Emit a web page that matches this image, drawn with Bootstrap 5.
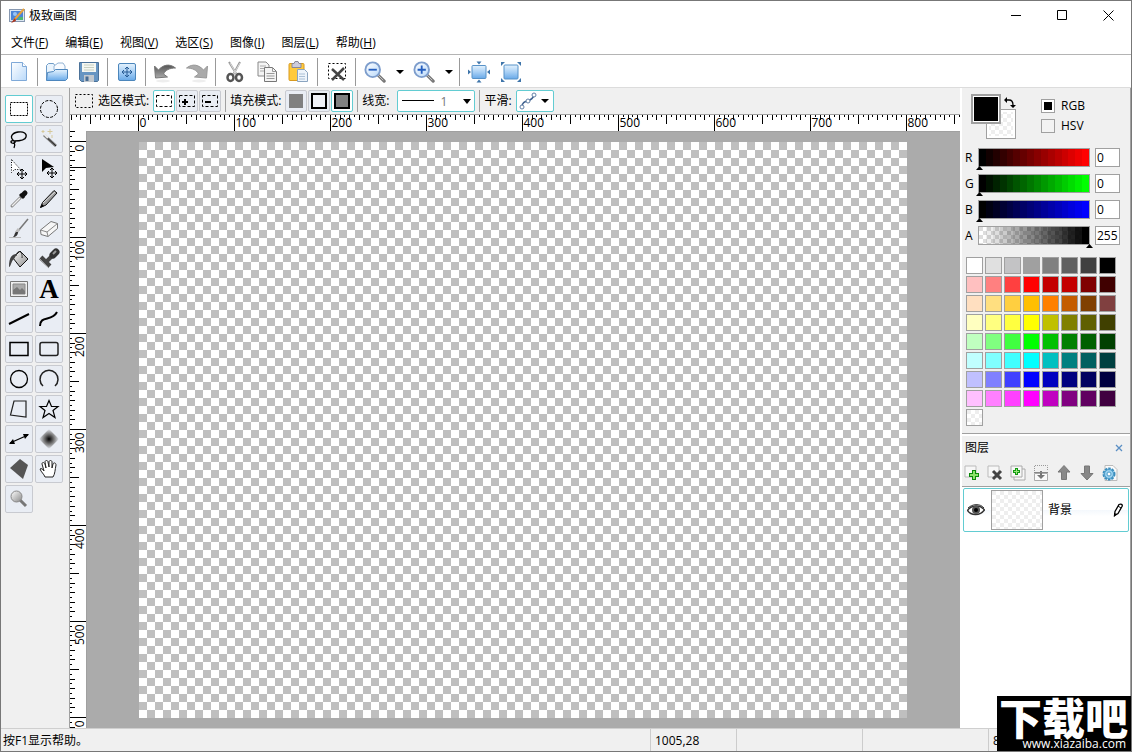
<!DOCTYPE html>
<html lang="zh-CN">
<head>
<meta charset="utf-8">
<meta name="viewport" content="width=device-width, initial-scale=1">
<title>极致画图</title>
<link href="https://cdn.jsdelivr.net/npm/bootstrap@5.3.0/dist/css/bootstrap.min.css" rel="stylesheet">
<style>
:root { --edge:#a0a0a0; --teal:#62ccd2; --face:#f0f0f0; }
body { font-family:"Open Sans","Noto Sans CJK SC",sans-serif; font-size:12px; line-height:16px; color:#000; background:#fff; }
button { font:inherit; color:inherit; padding:0; }
.app { border:1px solid #777; background:var(--face); }
.titlebar { height:29px; background:#fff; padding-left:8px; }
.win-btn { width:46px; height:29px; border:0; background:none; display:flex; align-items:center; justify-content:center; }
.menubar { height:25px; background:#fff; border-bottom:1px solid #b4b4b4; padding:2px 0 0 2px; gap:1px; }
.menubar .nav-link { color:#000; padding:3px 8px; }
.toolbar { height:33px; background:#fff; border-bottom:1px solid #dcdcdc; padding:2px 0 0 2px; }
.tb { width:32px; height:30px; border:0; background:none; display:flex; align-items:center; justify-content:center; }
.tb-drop { width:17px; height:30px; border:0; background:none; display:flex; align-items:center; justify-content:center; }
.tb-sep { width:1px; height:28px; background:#999; margin:0 3px 0 2px; }
.caret { width:0; height:0; border:4px solid transparent; border-top-color:#000; border-bottom:0; }
.toolbox { width:69px; border-right:1px solid var(--edge); padding:7px 0 0 4px; }
.tool-grid { display:grid; grid-template-columns:28px 28px; gap:2px; }
.tool { width:28px; height:28px; border:1px solid #c8cad0; border-radius:2px; background:#e9edf4; display:flex; align-items:center; justify-content:center; }
.tool svg { overflow:visible; }
.tool.on { border-color:var(--teal); background:#fff; }
.tool.sm { width:22px; height:22px; }
.options { height:27px; border-bottom:1px solid var(--edge); padding-left:4px; gap:4px; }
.tool-row { display:flex; gap:1px; }
.opt-sep { width:1px; height:22px; background:var(--edge); }
.opt-drop { height:22px; border:1px solid var(--teal); border-radius:2px; background:#fff; }
button.opt-drop { width:38px; padding:0 2px; }
select.opt-drop { width:78px; appearance:none; color:#777; padding:0 0 0 42px; font:12px "Open Sans",sans-serif; outline:0;
  background:#fff url("data:image/svg+xml,%3Csvg xmlns='http://www.w3.org/2000/svg' width='76' height='20'%3E%3Cpath d='M4 9.5h32' stroke='%23000'/%3E%3Cpath d='M65 8h8l-4 5z'/%3E%3C/svg%3E") no-repeat; }
.hruler { height:16px; background:#fff; }
.vruler { width:16px; background:#fff; }
.hruler svg, .vruler svg { display:block; width:100%; height:100%; overflow:visible; }
.hruler text, .vruler text { font-size:12px; }
.work { background:#ababab; border-left:1px solid var(--edge); border-top:1px solid var(--edge); padding-right:2px; }
.paper { flex:none; width:768px; height:576px; background:repeating-conic-gradient(#fff 0 25%,#bfbfbf 0 50%) 0 0/16px 16px; }
.faint { background:repeating-conic-gradient(#fff 0 25%,#eee 0 50%) 0 0/8px 8px; }
.side { width:171px; border-left:2px solid #fff; border-right:1px solid var(--edge); }
.colors { height:346px; border-bottom:1px solid var(--edge); padding:6px 0 0 3px; }
.swatches { position:relative; width:46px; height:45px; margin-left:6px; }
.chip { position:absolute; width:30px; height:30px; border:1px solid var(--edge); }
.chip.front { left:0; top:0; border-width:2px; background:#000; box-shadow:inset 0 0 0 1px #fff; }
.chip.back { left:15px; top:15px; box-shadow:inset 0 0 0 2px #fff; }
.swap { position:absolute; left:33px; top:3px; border:0; background:none; line-height:0; }
.modes { gap:4px; padding-top:4px; }
.modes label { display:flex; align-items:center; gap:6px; }
.tick { appearance:none; width:14px; height:14px; margin:0; border:1px solid var(--edge); background:#f3f3f3; }
.tick:checked { background:linear-gradient(#000,#000) center/8px 8px no-repeat #fff; }
.chans { padding-top:9px; }
.chan { height:19px; margin-bottom:7px; }
.chan-name { width:13px; }
.chan-bar { position:relative; width:112px; height:19px; border:1px solid var(--edge); }
.chan-bar input { position:absolute; left:-3px; top:-1px; width:117px; height:23px; margin:0; appearance:none; background:none; }
.chan-bar input::-webkit-slider-runnable-track { height:23px; background:none; }
.chan-bar input::-webkit-slider-thumb { appearance:none; width:7px; height:4px; margin-top:18px; background:#000; clip-path:polygon(50% 0,100% 100%,0 100%); }
.chan-val { width:25px; height:19px; margin-left:5px; border:1px solid var(--edge); padding:0 0 0 1px; font:12px "Open Sans",sans-serif; outline:0; }
.palette { display:grid; grid-template-columns:repeat(8,17px); gap:2px; margin:12px 0 0 1px; }
.palette button { width:17px; height:17px; border:1px solid var(--edge); }
.layers-head { border-top:2px solid #fff; height:25px; padding:1px 4px 0 3px; }
.layer-close { border:0; background:none; line-height:0; padding:3px; }
.layer-tools { height:28px; border-bottom:1px solid var(--edge); }
.layer-tools button { width:23px; border:0; background:none; line-height:0; padding-right:4px; }
.layer-list { background:#fff; padding:1px; }
.layer { height:44px; border:1px solid var(--teal); border-radius:2px; padding:0 4px 0 3px; background:linear-gradient(#fff 50%,#f4f8fc 50%,#fff 65%); }
.thumb { width:52px; height:40px; border:1px solid var(--edge); margin:0 5px 0 6px; }
.status { height:23px; border-top:1px solid #cfcfcf; }
.status > span { padding:4px 0 0 2px; }
.status > .cell { border-left:1px solid #ccc; padding-left:4px; }
.brand { position:absolute; right:0; bottom:0; width:134px; height:55px; background:#000; color:#fff; overflow:hidden; }
.brand strong { display:block; font:900 43px/40px "Noto Sans CJK SC",sans-serif; white-space:nowrap; padding-left:2px; }
.brand span { display:block; text-align:right; padding-right:5px; line-height:15px; }
</style>
</head>
<body>
<svg width="0" height="0" class="position-absolute" aria-hidden="true">
  <defs>
    <linearGradient id="blue" x1="0" y1="0" x2="0" y2="1"><stop offset="0" stop-color="#e4f2fd"/><stop offset=".5" stop-color="#a9d0f5"/><stop offset="1" stop-color="#68a9e8"/></linearGradient>
    <linearGradient id="pale" x1="0" y1="0" x2="1" y2="1"><stop offset="0" stop-color="#fff"/><stop offset="1" stop-color="#b9d9fa"/></linearGradient>
    <linearGradient id="steel" x1="0" y1="0" x2="0" y2="1"><stop offset="0" stop-color="#555"/><stop offset="1" stop-color="#aaa"/></linearGradient>
    <linearGradient id="silver" x1="0" y1="0" x2="1" y2="1"><stop offset="0" stop-color="#fff"/><stop offset="1" stop-color="#888"/></linearGradient>
    <radialGradient id="soft"><stop offset="0" stop-color="#000"/><stop offset=".5" stop-color="#777"/><stop offset="1" stop-color="#e9edf4"/></radialGradient>
    <g id="lens"><path d="M15 15l7 7" stroke="#777" stroke-width="3.4" stroke-linecap="round"/><path d="M15 15l6 6" stroke="#ccc" stroke-width="1"/><circle cx="9.500" cy="9.500" r="8" fill="url(#pale)" stroke="#7d9dcc" stroke-width="2"/></g>
    <path id="cross4" d="M0-5V5M-5 0H5M-2-3L0-5 2-3M-2 3L0 5 2 3M-3-2L-5 0-3 2M3-2L5 0 3 2"/>
  </defs>
</svg>

<div class="app d-flex flex-column vh-100 overflow-hidden position-relative">
  <header class="titlebar d-flex align-items-center">
    <svg width="16" height="16" viewBox="0 0 16 16"><rect x=".5" y="1.500" width="15" height="12" fill="#dce6f2" stroke="#8798b0"/><rect x="2" y="3" width="12" height="9" fill="#4a84d8"/><circle cx="6" cy="6" r="2" fill="#9cc4f4"/><path d="M10 9h4v3h-5z" fill="#4fb870"/><path d="M15 1L5 12" stroke="#e9a23b" stroke-width="2"/><path d="M6 10l-4 5 5-2z" fill="#a83520"/></svg>
    <span class="ms-1 flex-grow-1">极致画图</span>
    <button class="win-btn" aria-label="最小化"><svg width="11" height="11"><path d="M0 5.500h10" stroke="#000"/></svg></button>
    <button class="win-btn" aria-label="最大化"><svg width="11" height="11"><path d="M.5.5h9v9h-9z" fill="none" stroke="#000"/></svg></button>
    <button class="win-btn" aria-label="关闭"><svg width="11" height="11"><path d="M.5.5l10 10M10.500.5l-10 10" stroke="#000"/></svg></button>
  </header>

  <nav class="menubar nav flex-nowrap align-items-center">
    <a class="nav-link" href="#">文件(<u>F</u>)</a>
    <a class="nav-link" href="#">编辑(<u>E</u>)</a>
    <a class="nav-link" href="#">视图(<u>V</u>)</a>
    <a class="nav-link" href="#">选区(<u>S</u>)</a>
    <a class="nav-link" href="#">图像(<u>I</u>)</a>
    <a class="nav-link" href="#">图层(<u>L</u>)</a>
    <a class="nav-link" href="#">帮助(<u>H</u>)</a>
  </nav>

  <div class="toolbar d-flex align-items-center" role="toolbar">
    <button class="tb" aria-label="新建"><svg width="18" height="22"><path d="M1.500 1.500h11l4 4v14h-15z" fill="url(#pale)" stroke="#7fa9d8"/><path d="M12.500 1.500v4h4" fill="#fff" stroke="#7fa9d8"/></svg></button>
    <i class="tb-sep"></i>
    <button class="tb" aria-label="打开"><svg width="24" height="22"><path d="M1.500 19V4.500l2-2h5l2 3h9v5" fill="#eaf4fd" stroke="#6f9cc8"/><path d="M9 5l4-3h5l2 3v4H9z" fill="#f8fbff" stroke="#94b4d4"/><path d="M1.500 19.500l1-8 6-1 2-2h12v9l-2 2z" fill="url(#blue)" stroke="#4d86bd"/></svg></button>
    <button class="tb" aria-label="保存"><svg width="20" height="20"><path d="M.5.5h19v18l-1 1h-16l-2-2z" fill="#6795c2" stroke="#4c7299"/><path d="M3 1h14v9H3z" fill="#f5f7f2"/><path d="M5 3h10M5 5.500h10M5 8h10" stroke="#c8d0c0"/><path d="M5 13h10v7H5z" fill="#c2c8ce"/><path d="M6.500 14.500h3V19h-3z" fill="#476c94"/></svg></button>
    <i class="tb-sep"></i>
    <button class="tb" aria-label="画布大小"><svg width="18" height="18"><rect x=".5" y=".5" width="17" height="17" rx="1.500" fill="url(#blue)" stroke="#4c86bb"/><use href="#cross4" x="9" y="9" fill="none" stroke="#265b94"/></svg></button>
    <i class="tb-sep"></i>
    <button class="tb" aria-label="撤销"><svg width="24" height="22"><path d="M1.500 5l1 12 12-1-4-3c2-4 6-6 12-6C16 2 10 4 5.500 9z" fill="url(#steel)" stroke="#777"/><ellipse cx="10" cy="20" rx="7" ry="1.500" fill="#eee"/></svg></button>
    <button class="tb" aria-label="重做"><svg width="24" height="22"><path d="M22.500 5l-1 12-12-1 4-3c-2-4-6-6-12-6C8 2 14 4 18.500 9z" fill="#aaa" stroke="#999"/><ellipse cx="14" cy="20" rx="7" ry="1.500" fill="#eee"/></svg></button>
    <i class="tb-sep"></i>
    <button class="tb" aria-label="剪切"><svg width="18" height="22"><path d="M3 1l8 13M14 1L7 14" stroke="#999" stroke-width="2"/><path d="M4 2l7 12M14 2L7 14" stroke="#e8e8e8" stroke-width=".8"/><ellipse cx="4.500" cy="16.500" rx="3" ry="3.500" fill="none" stroke="#555" stroke-width="2.500"/><ellipse cx="13" cy="16.500" rx="3" ry="3.500" fill="none" stroke="#555" stroke-width="2.500"/></svg></button>
    <button class="tb" aria-label="复制"><svg width="20" height="22"><path d="M1 1h8l3 3v11H1z" fill="#f4f4f4" stroke="#888"/><path d="M3 5h6M3 7.500h6M3 10h4" stroke="#aaa"/><path d="M7.500 6.500h8l4 4v10h-12z" fill="#f4f4f4" stroke="#777"/><path d="M15.500 6.500v4h4M9.500 12.500h8M9.500 15h8M9.500 17.500h8" fill="none" stroke="#999"/></svg></button>
    <button class="tb" aria-label="粘贴"><svg width="22" height="22"><rect x="1" y="2.500" width="15" height="17" rx="1" fill="#ffca3c" stroke="#d89a20"/><path d="M4 2.500h2l1-2h3l1 2h2v4H4z" fill="#ccd" stroke="#889"/><path d="M9.500 8.500h7l3 3v9h-10z" fill="#edf4fb" stroke="#8aa4c0"/><path d="M11 13h6M11 15.500h6M11 18h6" stroke="#abc0d6"/></svg></button>
    <i class="tb-sep"></i>
    <button class="tb" aria-label="取消选择"><svg width="20" height="20"><path d="M1.500 1.500h17v15h-17z" fill="none" stroke="#000" stroke-dasharray="2 2"/><path d="M5 7l12 11M17 6L5 18" stroke="#444" stroke-width="2.500"/></svg></button>
    <i class="tb-sep"></i>
    <button class="tb" aria-label="缩小"><svg width="22" height="22" viewBox="0 0 24 24"><use href="#lens"/><path d="M5 9.500h9" stroke="#255fc0" stroke-width="2"/></svg></button>
    <button class="tb-drop" aria-label="缩小比例"><i class="caret"></i></button>
    <button class="tb" aria-label="放大"><svg width="22" height="22" viewBox="0 0 24 24"><use href="#lens"/><path d="M5 9.500h9M9.500 5v9" stroke="#255fc0" stroke-width="2"/></svg></button>
    <button class="tb-drop" aria-label="放大比例"><i class="caret"></i></button>
    <i class="tb-sep"></i>
    <button class="tb" aria-label="实际大小"><svg width="22" height="22"><rect x="4" y="4.500" width="14" height="13" rx="1" fill="url(#blue)" stroke="#5792c8"/><path d="M8.500 0.500h5l-2.500 3zM8.500 21.500h5l-2.500-3zM0 8.500v5l3-2.500zM22 8.500v5l-3-2.500z" fill="#3f75aa"/></svg></button>
    <button class="tb" aria-label="适合窗口"><svg width="20" height="20"><rect x="3" y="3" width="14" height="14" rx="1" fill="url(#blue)" stroke="#5792c8"/><path d="M0 0h4L0 4zM20 0v4l-4-4zM0 20v-4l4 4zM20 20h-4l4-4z" fill="#3f75aa"/></svg></button>
  </div>

  <div class="d-flex flex-grow-1 overflow-hidden">
    <aside class="toolbox flex-shrink-0">
      <div class="tool-grid">
        <button class="tool on" aria-label="矩形选区"><svg width="20" height="16"><path d="M1.500 1.500h17v13h-17z" fill="none" stroke="#000" stroke-dasharray="2 1"/></svg></button>
        <button class="tool" aria-label="椭圆选区"><svg width="20" height="20"><circle cx="10" cy="10" r="8.500" fill="none" stroke="#000" stroke-dasharray="3 1.500"/></svg></button>
        <button class="tool" aria-label="套索"><svg width="20" height="20"><path d="M5 12C0 8 3 4 9 3c6-1 9 2 8 5-1 4-8 4-12 4-3-1-4 1-2 2s4-1 3-2M5 13c1 2 1 4 0 6" fill="none" stroke="#000" stroke-width="1.300"/></svg></button>
        <button class="tool" aria-label="魔棒"><svg width="20" height="20"><path d="M5 6l12 11" stroke="#777" stroke-width="3"/><path d="M5 6l12 11" stroke="#222"/><path d="M5 5l4 4" stroke="#eee" stroke-width="2"/><path d="M11 0v5M8.500 2.500h5M4 1v3M2.500 2.500h3M13 6v3" stroke="#d5c89a"/></svg></button>
        <button class="tool" aria-label="移动选区"><svg width="22" height="22"><path d="M3.500 1.500v13l3-3h6z" fill="#fff" stroke="#000" stroke-dasharray="1 1.500"/><use href="#cross4" x="14" y="16" fill="none" stroke="#000"/></svg></button>
        <button class="tool" aria-label="移动"><svg width="22" height="22"><path d="M4 1v13l4-4 8-1z"/><use href="#cross4" x="14" y="15" fill="none" stroke="#000"/></svg></button>
        <button class="tool" aria-label="吸管"><svg width="20" height="20"><path d="M3 17l9-9" stroke="#888" stroke-width="3" stroke-linecap="round"/><path d="M3 17l8-8" stroke="#eee" stroke-width="1.500"/><path d="M11 5l4 4" stroke="#111" stroke-width="3"/><path d="M14 6l2-2" stroke="#111" stroke-width="5" stroke-linecap="round"/></svg></button>
        <button class="tool" aria-label="铅笔"><svg width="20" height="20"><path d="M1.500 18.500l2-5L15 1.500l3 2.500L7 16z" fill="#999" stroke="#111"/><path d="M4 14L16 3" stroke="#ddd"/><path d="M1 19l2-4 2 2z"/></svg></button>
        <button class="tool" aria-label="画笔"><svg width="22" height="22"><path d="M20 1L10 13" stroke="#777" stroke-width="1.500"/><path d="M11 11l-3 4" stroke="#bbb" stroke-width="3"/><path d="M10 14c0 3-2 5-5 5 2-2 1-3 3-5z" fill="#333"/><path d="M1 19.500h12" stroke="#bbb"/></svg></button>
        <button class="tool" aria-label="橡皮"><svg width="20" height="18"><path d="M1.500 10L12 1.500l6.500 2v5L9 16.500l-7-2z" fill="#f6f6f6" stroke="#777"/><path d="M1.500 10L8 12l10.500-8.500M8 12l1 4.500" fill="none" stroke="#888"/></svg></button>
        <button class="tool" aria-label="填充"><svg width="22" height="20"><path d="M5 9l7-7 8 8-8 8z" fill="url(#silver)" stroke="#111"/><path d="M8 7c1-7 7-5 6 2" fill="none" stroke="#333"/><path d="M9 5c-5 0-8 3-8 13 2 0 2-6 5-8z" fill="#444"/></svg></button>
        <button class="tool" aria-label="图章"><svg width="22" height="22"><path d="M8 14l9-9" stroke="#444" stroke-width="4"/><path d="M15 7l3-3" stroke="#333" stroke-width="7" stroke-linecap="round"/><path d="M15 6l3-3" stroke="#999" stroke-width="2"/><path d="M3 9l9 9" stroke="#444" stroke-width="4"/><path d="M1 11l10 9" stroke="#888"/></svg></button>
        <button class="tool" aria-label="插入图片"><svg width="18" height="16"><path d="M.5.5h17v15H.5z" fill="#eee" stroke="#777"/><path d="M3 3h12v10H3z" fill="#aaa" stroke="#888"/><path d="M3 9l4-3 3 3 2-2 3 3v3H3z" fill="#777"/></svg></button>
        <button class="tool" aria-label="文字"><svg width="24" height="24"><text x="12" y="21" text-anchor="middle" font-family="Liberation Serif,serif" font-weight="bold" font-size="27">A</text></svg></button>
        <button class="tool" aria-label="直线"><svg width="22" height="14"><path d="M1 12L21 2" stroke="#000" stroke-width="2"/></svg></button>
        <button class="tool" aria-label="曲线"><svg width="20" height="20"><path d="M1 17c0-11 12-4 17-14" fill="none" stroke="#000" stroke-width="2"/></svg></button>
        <button class="tool" aria-label="矩形"><svg width="20" height="16"><path d="M1 1.500h18v13H1z" fill="none" stroke="#000" stroke-width="1.500"/></svg></button>
        <button class="tool" aria-label="圆角矩形"><svg width="20" height="16"><rect x="1" y="1.500" width="18" height="13" rx="2" fill="none" stroke="#222" stroke-width="1.500"/></svg></button>
        <button class="tool" aria-label="椭圆"><svg width="20" height="20"><circle cx="10" cy="10" r="8.500" fill="none" stroke="#000" stroke-width="1.300"/></svg></button>
        <button class="tool" aria-label="圆弧"><svg width="20" height="20"><path d="M4 17a9 9 0 1 1 12 0" fill="none" stroke="#222" stroke-width="1.500"/></svg></button>
        <button class="tool" aria-label="多边形"><svg width="20" height="20"><path d="M5 2h12v16L1.500 16z" fill="none" stroke="#222" stroke-width="1.200"/></svg></button>
        <button class="tool" aria-label="星形"><svg width="22" height="20"><path d="M11 1.500l2.500 6H20l-5 4 2 7-6-4-6 4 2-7-5-4h6.500z" fill="none" stroke="#000" stroke-width="1.200"/></svg></button>
        <button class="tool" aria-label="箭头"><svg width="22" height="12"><path d="M2 10L20 2" stroke="#000" stroke-width="1.200"/><path d="M1 11l4-5 2 5zM21 1l-6 0 2 5z"/></svg></button>
        <button class="tool" aria-label="渐变"><svg width="20" height="20"><path d="M10 0l10 10-10 10L0 10z" fill="url(#soft)"/></svg></button>
        <button class="tool" aria-label="填充多边形"><svg width="20" height="20"><path d="M11 0l8 6-5 14L1 9z" fill="#555"/></svg></button>
        <button class="tool" aria-label="抓手"><svg width="20" height="20"><path d="M6 18c-1-3-4-5-5-8 1-1 3 0 4 2L3 5c0-2 2-2 3 0l1 4-1-6c0-2 3-2 3 0l1 5V3c0-2 3-2 3 0v6l1-4c1-2 3-1 3 1-1 5-1 9-3 12z" fill="#fff" stroke="#222"/></svg></button>
        <button class="tool" aria-label="缩放"><svg width="20" height="20"><path d="M11 11l6 6" stroke="#777" stroke-width="3"/><circle cx="7.500" cy="7.500" r="5.500" fill="url(#silver)" stroke="#888"/></svg></button>
      </div>
    </aside>

    <main class="d-flex flex-column flex-grow-1 overflow-hidden">
      <div class="options d-flex align-items-center flex-shrink-0">
        <svg width="20" height="16"><path d="M1.500 1.500h17v13h-17z" fill="none" stroke="#000" stroke-dasharray="2 2"/></svg>
        <span>选区模式:</span>
        <div class="tool-row">
          <button class="tool sm on" aria-label="新选区"><svg width="18" height="12"><path d="M1.500.5h15v11h-15z" fill="none" stroke="#000" stroke-dasharray="3 2"/></svg></button>
          <button class="tool sm" aria-label="添加到选区"><svg width="18" height="12"><path d="M1.500.5h15v11h-15z" fill="none" stroke="#000" stroke-dasharray="3 2"/><path d="M4 7h6M7 4v6" stroke="#000" stroke-width="2"/></svg></button>
          <button class="tool sm" aria-label="从选区减去"><svg width="18" height="12"><path d="M1.500.5h15v11h-15z" fill="none" stroke="#000" stroke-dasharray="3 2"/><path d="M4 7h6" stroke="#000" stroke-width="2"/></svg></button>
        </div>
        <i class="opt-sep"></i>
        <span>填充模式:</span>
        <div class="tool-row">
          <button class="tool sm" aria-label="填充"><svg width="14" height="14"><path d="M0 0h14v14H0z" fill="#808080"/></svg></button>
          <button class="tool sm" aria-label="描边"><svg width="16" height="16"><path d="M1 1h14v14H1z" fill="#f0f2f8" stroke="#000" stroke-width="2"/></svg></button>
          <button class="tool sm on" aria-label="填充与描边"><svg width="16" height="16"><path d="M1 1h14v14H1z" fill="#808080" stroke="#000" stroke-width="2"/></svg></button>
        </div>
        <i class="opt-sep"></i>
        <label for="lw">线宽:</label>
        <select id="lw" class="opt-drop ms-1"><option>1</option></select>
        <i class="opt-sep"></i>
        <span id="smooth">平滑:</span>
        <button class="opt-drop d-flex align-items-center gap-1" aria-labelledby="smooth"><svg width="18" height="18"><path d="M3 15C3 6 13 12 15 3" fill="none" stroke="#3f618e" stroke-width="1.500"/><g fill="#fff" stroke="#6280a6"><circle cx="3" cy="15" r="2"/><circle cx="9" cy="9" r="2"/><circle cx="15" cy="3" r="2"/></g></svg><i class="caret"></i></button>
      </div>
      <div class="hruler flex-shrink-0"><svg id="hr"></svg></div>
      <div class="d-flex flex-grow-1 overflow-hidden">
        <div class="vruler flex-shrink-0"><svg id="vr"></svg></div>
        <div class="work flex-grow-1 d-flex align-items-center justify-content-center overflow-hidden"><div class="paper" id="paper"></div></div>
      </div>
    </main>

    <aside class="side flex-shrink-0 d-flex flex-column">
      <section class="colors">
        <div class="d-flex">
          <div class="swatches">
            <button class="chip back faint" aria-label="背景色"></button>
            <button class="chip front" aria-label="前景色"></button>
            <button class="swap" aria-label="交换颜色"><svg width="12" height="12"><path d="M2 3h3c3 0 4 2 4 5" fill="none" stroke="#000" stroke-width="1.300"/><path d="M0 3l3-3v6zM6 8h6l-3 3z"/></svg></button>
          </div>
          <div class="modes d-flex flex-column ms-4">
            <label><input type="checkbox" class="tick" checked>RGB</label>
            <label><input type="checkbox" class="tick">HSV</label>
          </div>
        </div>
        <div class="chans" id="chans"></div>
        <div class="palette" id="palette"></div>
      </section>
      <section class="d-flex flex-column flex-grow-1">
        <div class="layers-head d-flex justify-content-between align-items-center"><span>图层</span><button class="layer-close" aria-label="关闭"><svg width="8" height="8"><path d="M1 1l6 6M7 1L1 7" stroke="#5b8fc4" stroke-width="1.300"/></svg></button></div>
        <div class="layer-tools d-flex align-items-center">
          <button aria-label="新建图层"><svg width="16" height="16"><path d="M1 1h11v11H1z" fill="#f7f7f7" stroke="#bbb"/><path d="M10 5v10M5 10h10" stroke="#0a8a0a" stroke-width="4"/><path d="M10 6v8M6 10h8" stroke="#8be36a" stroke-width="2"/></svg></button>
          <button aria-label="删除图层"><svg width="16" height="16"><path d="M1 1h11v11H1z" fill="#f7f7f7" stroke="#bbb"/><path d="M6 6l8 8M14 6l-8 8" stroke="#444" stroke-width="3"/></svg></button>
          <button aria-label="复制图层"><svg width="16" height="16"><path d="M4 4h11v11H4z" fill="#f7f7f7" stroke="#aaa"/><path d="M1 1h11v11H1z" fill="#f7f7f7" stroke="#aaa"/><path d="M6.500 3v7M3 6.500h7" stroke="#129a12" stroke-width="3"/><path d="M6.500 4v5M4 6.500h5" stroke="#9be87c"/></svg></button>
          <button aria-label="向下合并"><svg width="16" height="16"><path d="M1.500 6V.5h13V6" fill="none" stroke="#999" stroke-dasharray="1 1"/><path d="M1.500 15.500v-7h13v7z" fill="#fafafa" stroke="#aaa"/><path d="M7 6h2v4h3l-4 4-4-4h3z" fill="#777"/><path d="M1 7.500h14" stroke="#888"/></svg></button>
          <button aria-label="上移"><svg width="14" height="16"><path d="M7 .5L13 7H9.500v7.500h-5V7H1z" fill="#888" stroke="#777"/></svg></button>
          <button aria-label="下移"><svg width="14" height="16"><path d="M7 15L13 8.500H9.500V1h-5v7.500H1z" fill="#888" stroke="#777"/></svg></button>
          <button aria-label="属性"><svg width="16" height="16"><path d="M3 .5h8l4 4v11H3z" fill="#fafafa" stroke="#bbb"/><circle cx="7" cy="9" r="5.500" fill="#9bd2ef" stroke="#3b8dbd" stroke-width="2" stroke-dasharray="2.500 1"/><circle cx="7" cy="9" r="4.500" fill="#9bd2ef" stroke="#4b9bc8"/><circle cx="7" cy="9" r="2" fill="#fff" stroke="#4b9bc8"/></svg></button>
        </div>
        <div class="layer-list flex-grow-1">
          <div class="layer d-flex align-items-center">
            <svg width="18" height="12"><path d="M.5 6.500C4 1 13 0 17.500 6 13 12 4 12 .5 6.500z" fill="#fff" stroke="#333" stroke-width="1.500"/><circle cx="9" cy="6" r="4" fill="#555"/><circle cx="9" cy="6" r="2"/><path d="M1 4C5 0 13-1 17 4" fill="none" stroke="#333"/></svg>
            <div class="thumb faint"></div>
            <span class="flex-grow-1">背景</span>
            <svg width="12" height="16"><path d="M2.500 13.500l.5-4 4-7c2-1 4 0 3 2l-4 7z" fill="#fff" stroke="#000" stroke-width="1.300"/><path d="M6 4l3 2" stroke="#000"/><path d="M2 15v-4l3 1z"/></svg>
          </div>
        </div>
      </section>
    </aside>
  </div>

  <footer class="status d-flex flex-shrink-0">
    <span class="flex-grow-1">按F1显示帮助。</span>
    <span class="cell" style="width:86px">1005,28</span>
    <span class="cell" style="width:126px"></span>
    <span class="cell" style="width:126px"></span>
    <span class="cell" style="width:143px">8</span>
  </footer>
  <div class="brand"><strong>下载吧</strong><span>www.xiazaiba.com</span></div>
</div>

<script src="https://cdn.jsdelivr.net/npm/bootstrap@5.3.0/dist/js/bootstrap.bundle.min.js"></script>
<script>
// Colour channels, each shown as a bar of sixteen steps
const CHECK = 'repeating-conic-gradient(#fff 0 25%,#ddd 0 50%) 0 0/8px 8px';
function bar(tint) {
  const stops = [];
  for (let i = 0; i < 16; i++) stops.push(`${tint(i / 15)} ${i / 16 * 100}% ${(i + 1) / 16 * 100}%`);
  return `linear-gradient(90deg,${stops.join(',')})`;
}
const channels = [
  ['R', 0, bar(t => `rgb(${Math.round(t * 255)} 0 0)`)],
  ['G', 0, bar(t => `rgb(0 ${Math.round(t * 255)} 0)`)],
  ['B', 0, bar(t => `rgb(0 0 ${Math.round(t * 255)})`)],
  ['A', 255, bar(t => `rgb(0 0 0 / ${Math.round(t * 100)}%)`) + ',' + CHECK]];
document.getElementById('chans').innerHTML = channels.map(([n, v, bg]) =>
  `<div class="chan d-flex align-items-center"><label class="chan-name" for="v${n}">${n}</label>
   <div class="chan-bar" style="background:${bg}"><input type="range" min="0" max="255" value="${v}" aria-label="${n}"></div>
   <input class="chan-val" id="v${n}" value="${v}"></div>`).join('');

// Palette rows, light to dark
const rows = ['fff e0e0e0 c3c3c5 a0a0a0 808080 606060 404040 000', 'ffc0c0 ff8080 ff4040 f00 c40000 c40000 800000 400000',
  'ffdfc0 ffdf80 ffcf40 ffbf00 ff8000 c45c00 804000 804040', 'ffffc0 ffff80 ffff40 ff0 c0c000 808000 606000 404000',
  'c0ffc0 80ff80 40ff40 0f0 00c000 008000 006000 004000', 'c0ffff 80ffff 40ffff 0ff 00c0c0 008080 006060 004040',
  'c0c0ff 8080ff 4040ff 00f 0000c0 000080 000060 000040', 'ffc0ff ff80ff ff40ff f0f c000c0 800080 600060 400040'];
document.getElementById('palette').innerHTML = rows.join(' ').split(' ').map(c =>
  `<button style="background:#${c}" aria-label="#${c}"></button>`).join('') + '<button class="faint" aria-label="透明"></button>';

// Rulers follow the paper: 100 units are 96 pixels at this zoom
const UNIT = 0.96;
function drawRuler(svg, origin, size, vertical) {
  let d = '', labels = '';
  for (let u = Math.ceil(-origin / UNIT / 5) * 5; origin + u * UNIT < size; u += 5) {
    const p = Math.round(origin + u * UNIT - 1) + 0.5;
    const len = u % 100 === 0 ? 16 : u % 50 === 0 ? 9 : u % 10 === 0 ? 5 : 2;
    d += vertical ? `M0 ${p}h${len}` : `M${p} 0v${len}`;
    if (u % 100 === 0 && u >= 0) labels += vertical
      ? `<text transform="translate(14 ${p + 3}) rotate(-90)" text-anchor="end">${u}</text>`
      : `<text x="${p + 1}" y="12">${u}</text>`;
  }
  if (vertical) d += `M0 ${Math.round(origin + 25) + 0.5}h16`;
  svg.innerHTML = `<path d="${d}" stroke="#000"/>${labels}`;
}
function layoutRulers() {
  const paper = document.getElementById('paper').getBoundingClientRect();
  const h = document.getElementById('hr'), v = document.getElementById('vr');
  const hb = h.getBoundingClientRect(), vb = v.getBoundingClientRect();
  drawRuler(h, Math.round(paper.left - hb.left), hb.width, false);
  drawRuler(v, Math.round(paper.top - vb.top), vb.height, true);
}
layoutRulers();
addEventListener('resize', layoutRulers);
</script>
</body>
</html>
